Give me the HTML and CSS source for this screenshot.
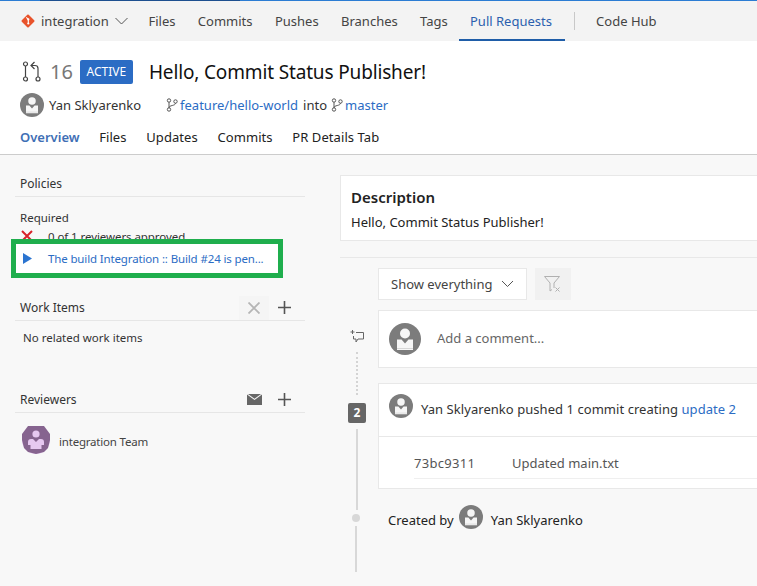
FILE: index.html
```html
<!DOCTYPE html>
<html lang="en">
<head>
  <meta charset="UTF-8" />
  <meta name="viewport" content="width=device-width, initial-scale=1.0" />
  <title>Pull Request 16 - integration</title>
  <link rel="stylesheet" href="styles.css">
</head>
<body>

<svg class="sprites" width="0" height="0">
  <symbol id="avatar" viewBox="0 0 32 32">
    <circle cx="16" cy="16" r="16" fill="#7c7c7c" />
    <circle cx="16" cy="10.500" r="5" fill="#f6f6f6" />
    <path d="M8 16.500h4.500L16 20.500l3.500-4H24V27H8z" fill="#f6f6f6" />
    <path d="M8 25h16v.8H8z" fill="#cfcfcf" />
  </symbol>
  <symbol id="branch" viewBox="0 0 12 14">
    <g fill="none" stroke="#555" stroke-width="1">
      <circle cx="3" cy="2.500" r="1.700" />
      <circle cx="3" cy="11.500" r="1.700" />
      <circle cx="9.500" cy="3.500" r="1.700" />
      <path d="M3 4.200v5.600M9.500 5.200c0 2.800-6.500 1.800-6.500 4.600" />
    </g>
  </symbol>
  <symbol id="plus" viewBox="0 0 13 13">
    <path d="M6.500 0v13M0 6.500h13" stroke="#555" stroke-width="1.600" fill="none" />
  </symbol>
</svg>

<nav class="topnav">
  <div class="repo">
    <svg class="git-logo" width="14" height="14" viewBox="0 0 14 14">
      <rect x="2.100" y="2.100" width="9.800" height="9.800" rx="1" transform="rotate(45 7 7)" fill="#e8532b" />
      <path d="M5.300 3.400l2 2v4" stroke="#fff" stroke-width="1.100" fill="none" />
      <circle cx="7.300" cy="5.400" r="1.100" fill="#fff" />
      <circle cx="7.300" cy="9.500" r="1.100" fill="#fff" />
    </svg>
    <span>integration</span>
    <svg class="chevron" width="13" height="8" viewBox="0 0 13 8">
      <path d="M.5 1l6 6 6-6" fill="none" stroke="#555" stroke-width="1" />
    </svg>
  </div>
  <a class="nav-link">Files</a>
  <a class="nav-link">Commits</a>
  <a class="nav-link">Pushes</a>
  <a class="nav-link">Branches</a>
  <a class="nav-link">Tags</a>
  <a class="nav-link selected">Pull Requests</a>
  <span class="nav-sep"></span>
  <a class="nav-link">Code Hub</a>
</nav>

<header class="pr-header">
  <div class="pr-title-row">
    <svg class="pr-icon" width="20" height="21" viewBox="0 0 20 21">
      <g fill="none" stroke="#444" stroke-width="1.200">
        <circle cx="3.500" cy="3" r="2" />
        <circle cx="3.500" cy="18" r="2" />
        <circle cx="16" cy="18" r="2" />
        <path d="M3.500 5v11M16 16V7.500c0-2-1-3-3-3H9.500M12.500 1L9 4.500 12.500 8" />
      </g>
    </svg>
    <span class="pr-id">16</span>
    <span class="pr-status">ACTIVE</span>
    <h1 class="pr-title">Hello, Commit Status Publisher!</h1>
  </div>
  <div class="pr-meta">
    <svg class="avatar-md" width="24" height="24"><use href="#avatar" /></svg>
    <span class="pr-author">Yan Sklyarenko</span>
    <svg class="branch-icon first" width="12" height="14"><use href="#branch" /></svg>
    <a class="link">feature/hello-world</a>
    <span class="into">into</span>
    <svg class="branch-icon" width="12" height="14"><use href="#branch" /></svg>
    <a class="link">master</a>
  </div>
  <div class="pr-tabs">
    <a class="pr-tab selected">Overview</a>
    <a class="pr-tab">Files</a>
    <a class="pr-tab">Updates</a>
    <a class="pr-tab">Commits</a>
    <a class="pr-tab">PR Details Tab</a>
  </div>
</header>

<div class="page-body">
  <aside class="sidebar">
    <section class="policies">
      <div class="side-head"><span>Policies</span></div>
      <div class="required">Required</div>
      <div class="policy-row">
        <svg class="policy-icon" width="12" height="12" viewBox="0 0 12 12">
          <path d="M1 1l10 10M11 1L1 11" stroke="#d8232a" stroke-width="2" fill="none" />
        </svg>
        <span>0 of 1 reviewers approved</span>
      </div>
      <div class="policy-row pending">
        <svg class="policy-icon" width="9" height="11" viewBox="0 0 9 11">
          <path d="M0 0l9 5.500L0 11z" fill="#2b74d0" />
        </svg>
        <a class="link">The build Integration :: Build #24 is pen...</a>
      </div>
      <div class="highlight"></div>
    </section>

    <section class="work-items">
      <div class="side-head">
        <span>Work Items</span>
        <div class="side-actions">
          <span class="side-btn disabled">
            <svg width="12" height="12" viewBox="0 0 12 12"><path d="M.5.500l11 11M11.500.500l-11 11" stroke="#b5b5b5" stroke-width="1.800" fill="none" /></svg>
          </span>
          <span class="side-btn"><svg width="13" height="13"><use href="#plus" /></svg></span>
        </div>
      </div>
      <div class="no-items">No related work items</div>
    </section>

    <section class="reviewers">
      <div class="side-head">
        <span>Reviewers</span>
        <div class="side-actions">
          <span class="side-btn">
            <svg width="15" height="11" viewBox="0 0 15 11"><path d="M0 .500L7.500 6 15 .500V11H0z" fill="#666" /><path d="M1 0h13L7.500 4.800z" fill="#666" /></svg>
          </span>
          <span class="side-btn"><svg width="13" height="13"><use href="#plus" /></svg></span>
        </div>
      </div>
      <div class="reviewer">
        <svg width="28" height="28" viewBox="0 0 28 28">
          <circle cx="14" cy="14" r="14" fill="#e6c8f0" />
          <path d="M6 0h16l6 8v6h-4v5h-2v-3c0-2-1-3-3-3h-2l-3 3-3-3H9c-2 0-3 1-3 3v3H4v-5H0V8z" fill="#86648f" />
          <path d="M6 19h16v7l-8 2-8-2zM0 14h4v5h2v7L2 22zM28 14h-4v5h-2v7l4-4z" fill="#86648f" />
          <circle cx="14" cy="8" r="3.600" fill="#e6c8f0" />
          <path d="M8.500 14.500H11l3 3 3-3h2.500V23h-11z" fill="#e6c8f0" />
        </svg>
        <span>integration Team</span>
      </div>
    </section>
  </aside>

  <main class="content">
    <section class="description">
      <h2>Description</h2>
      <p>Hello, Commit Status Publisher!</p>
    </section>

    <div class="activity">
      <div class="timeline">
        <svg class="add-comment" width="14" height="13" viewBox="0 0 14 13">
          <path d="M2.500 0v4M.5 2h4M6 2.500h7.500v6.500H8l-2 3V9H3.500V6" fill="none" stroke="#666" stroke-width="1" />
        </svg>
        <span class="line-dotted"></span>
        <span class="update-badge">2</span>
        <span class="line-solid first"></span>
        <span class="line-dot"></span>
        <span class="line-solid last"></span>
      </div>

      <div class="thread">
        <div class="filter-row">
          <div class="filter-select">
            <span>Show everything</span>
            <svg width="13" height="8" viewBox="0 0 13 8"><path d="M1 1l5.500 5.500L12 1" fill="none" stroke="#555" stroke-width="1" /></svg>
          </div>
          <div class="filter-clear">
            <svg width="18" height="16" viewBox="0 0 18 16">
              <path d="M.5.500h15L10 7v5M.5.500L6 7v8l2-1.500" fill="none" stroke="#b0b0b0" stroke-width="1" />
              <path d="M11.500 11.500l4 4M15.500 11.500l-4 4" stroke="#b0b0b0" stroke-width="1" fill="none" />
            </svg>
          </div>
        </div>

        <div class="card comment-box">
          <svg width="32" height="32"><use href="#avatar" /></svg>
          <span>Add a comment...</span>
        </div>

        <div class="card push-card">
          <div class="push-head">
            <svg width="24" height="24"><use href="#avatar" /></svg>
            <span>Yan Sklyarenko pushed <a class="plain">1 commit</a> creating <a class="link">update 2</a></span>
          </div>
          <div class="push-commit">
            <div class="commit-row">
              <span class="commit-id">73bc9311</span>
              <span>Updated main.txt</span>
            </div>
          </div>
        </div>

        <div class="created-by">
          <span>Created by</span>
          <svg width="24" height="24"><use href="#avatar" /></svg>
          <span>Yan Sklyarenko</span>
        </div>
      </div>
    </div>
  </main>
</div>

</body>
</html>
```

FILE: styles.css
```css
html,
body {
  overflow: hidden;
}

body {
  margin: 0;
  height: 586px;
  font-family: "Noto Sans", "Open Sans", sans-serif;
  font-size: 13px;
  color: #333;
  background: #f8f8f8;
}

a {
  text-decoration: none;
}

svg {
  display: block;
  flex: none;
}

.sprites {
  position: absolute;
}

.link {
  color: #2b6cc4;
}

.plain {
  color: #333;
}

/* top navigation */
.topnav {
  height: 40px;
  display: flex;
  align-items: center;
  background: #f3f3f3;
  border-top: 1px solid #2b7cd3;
  position: relative;
}

.topnav::before {
  content: "";
  position: absolute;
  left: 40px;
  top: -1px;
  width: 200px;
  height: 1px;
  background: #1d4f8f;
}

.repo {
  display: flex;
  align-items: center;
  margin-left: 21px;
  margin-right: 9.5px;
}

.repo span {
  margin-left: 6px;
  color: #444;
}

.chevron {
  margin-left: 6px;
}

.nav-link {
  height: 39px;
  line-height: 39px;
  padding: 0 11.2px;
  color: #444;
  box-sizing: border-box;
}

.nav-link.selected {
  color: #2b5fae;
  border-bottom: 2px solid #1f5da8;
  padding: 0 13px 0 11px;
}

.nav-sep {
  width: 1px;
  height: 18px;
  background: #c8c8c8;
  margin: 0 9.5px;
}

/* pr header */
.pr-header {
  height: 114px;
  box-sizing: border-box;
  background: #fff;
  border-bottom: 1px solid #ccc;
  padding: 0 20px;
}

.pr-title-row {
  display: flex;
  align-items: center;
  height: 60px;
  padding-top: 1px;
  box-sizing: border-box;
}

.pr-icon {
  margin-left: 2px;
}

.pr-id {
  margin-left: 8px;
  font-size: 20px;
  color: #777;
}

.pr-status {
  margin-left: 7px;
  background: #2b6cc4;
  color: #fff;
  font-size: 12px;
  width: 53px;
  height: 24px;
  line-height: 24px;
  text-align: center;
  border-radius: 2px;
}

.pr-title {
  margin: 0 0 0 16px;
  font-size: 19px;
  letter-spacing: -0.15px;
  font-weight: 400;
  color: #111;
}

.pr-meta {
  display: flex;
  align-items: center;
  height: 24px;
  margin-top: -8px;
}

.pr-author {
  margin-left: 5px;
}

.branch-icon {
  margin-right: 2px;
}

.branch-icon.first {
  margin-left: 25px;
}

.into {
  margin: 0 4px 0 5px;
}

.pr-tabs {
  display: flex;
  gap: 19.7px;
  margin-top: 11px;
}

.pr-tab {
  color: #222;
  letter-spacing: 0.07px;
}

.pr-tab.selected {
  color: #3f6fb5;
  font-weight: 600;
  letter-spacing: 0;
}

/* page columns */
.page-body {
  display: flex;
  width: 790px;
}

.sidebar {
  width: 290px;
  margin-left: 15px;
  margin-right: 35px;
  flex: none;
}

.side-head {
  display: flex;
  align-items: center;
  justify-content: space-between;
  height: 29px;
  box-sizing: border-box;
  padding: 3px 0 0 5px;
  border-bottom: 1px solid #e6e6e6;
  font-size: 12px;
  color: #333;
}

.side-actions {
  display: flex;
  align-items: center;
  margin-right: 6px;
}

.side-btn {
  width: 30px;
  height: 24px;
  display: flex;
  align-items: center;
  justify-content: center;
}

.side-btn.disabled {
  background: #f5f5f5;
}

.policies {
  position: relative;
  padding-top: 13px;
}

.required {
  margin: 12px 0 0 5px;
  font-size: 11.5px;
  line-height: 17px;
}

.policy-row {
  display: flex;
  align-items: center;
  font-size: 11.5px;
  letter-spacing: -0.07px;
  height: 20px;
  padding-left: 6px;
  gap: 15px;
}

.policy-row.pending {
  position: relative;
  height: 29px;
  margin-top: -2px;
  gap: 16px;
  padding-left: 8px;
  letter-spacing: -0.14px;
  z-index: 1;
}

/* annotation drawn over the screenshot */
.highlight {
  position: absolute;
  left: -4px;
  top: 84px;
  width: 272px;
  height: 39px;
  box-sizing: border-box;
  border: 5px solid #1fae4d;
  background: #fff;
}

.work-items {
  margin-top: 19px;
}

.no-items {
  margin: 9px 0 0 8px;
  font-size: 11.5px;
}

.reviewers {
  margin-top: 39px;
}

.reviewer {
  display: flex;
  align-items: center;
  gap: 9px;
  margin: 13px 0 0 7px;
  font-size: 11.5px;
  letter-spacing: -0.2px;
  color: #444;
}

.reviewer span {
  margin-top: 2px;
}

/* right column */
.content {
  flex: 1;
  padding-top: 20px;
}

.description {
  height: 66px;
  box-sizing: border-box;
  background: #fff;
  border: 1px solid #e8e8e8;
  padding: 11px 10px;
}

.description h2 {
  margin: 0;
  font-size: 15px;
  line-height: 20px;
  font-weight: 600;
  color: #222;
}

.description p {
  margin: 6px 0 0;
  line-height: 18px;
  color: #222;
}

.activity {
  display: flex;
  margin-top: 16px;
  border-top: 1px solid #e8e8e8;
}

.timeline {
  width: 38px;
  flex: none;
  display: flex;
  flex-direction: column;
  align-items: center;
  padding: 72px 4px 0 0;
  box-sizing: border-box;
}

.add-comment {
  margin-left: -1px;
}

.line-dotted {
  width: 0;
  height: 43px;
  margin-top: 9px;
  border-left: 2px dotted #d4d4d4;
}

.update-badge {
  width: 18px;
  height: 20px;
  margin-top: 8px;
  background: #666;
  border-radius: 2px;
  color: #fff;
  font-size: 12px;
  font-weight: 700;
  line-height: 20px;
  text-align: center;
}

.line-solid {
  width: 2px;
  background: #d8d8d8;
}

.line-solid.first {
  height: 81px;
  margin-top: 6px;
}

.line-dot {
  width: 8px;
  height: 8px;
  margin: 4px 0 4px -2px;
  border-radius: 50%;
  background: #d8d8d8;
}

.line-solid.last {
  height: 46px;
  margin-left: -2px;
}

.thread {
  flex: 1;
  padding-top: 10px;
}

.filter-row {
  display: flex;
  gap: 8px;
}

.filter-select {
  width: 149px;
  height: 32px;
  box-sizing: border-box;
  display: flex;
  align-items: center;
  justify-content: space-between;
  padding: 0 12px;
  background: #fff;
  border: 1px solid #e8e8e8;
  color: #444;
}

.filter-clear {
  width: 36px;
  height: 32px;
  display: flex;
  align-items: center;
  justify-content: center;
  background: #f1f1f1;
}

.card {
  background: #fff;
  border: 1px solid #e8e8e8;
}

.comment-box {
  height: 58px;
  box-sizing: border-box;
  margin-top: 10px;
  display: flex;
  align-items: center;
  gap: 16px;
  padding-left: 10px;
  color: #666;
}

.comment-box span {
  margin-top: -2px;
}

.push-card {
  margin-top: 15px;
  height: 106px;
  box-sizing: border-box;
}

.push-head {
  height: 53px;
  box-sizing: border-box;
  display: flex;
  gap: 8px;
  padding: 10px 0 0 10px;
  border-bottom: 1px solid #e8e8e8;
  letter-spacing: 0.05px;
}

.push-head span {
  margin-top: 6px;
}

.push-commit {
  padding-left: 35px;
}

.commit-row {
  display: flex;
  height: 42px;
  align-items: center;
  padding-top: 10px;
  box-sizing: border-box;
  border-bottom: 1px solid #efefef;
  color: #555;
}

.commit-id {
  width: 98px;
  letter-spacing: 0.3px;
}

.created-by {
  display: flex;
  align-items: center;
  margin: 16px 0 0 10px;
  gap: 5px;
  color: #222;
}

.created-by span {
  padding-top: 6px;
}

.created-by span:last-child {
  margin-left: 3px;
}
```
